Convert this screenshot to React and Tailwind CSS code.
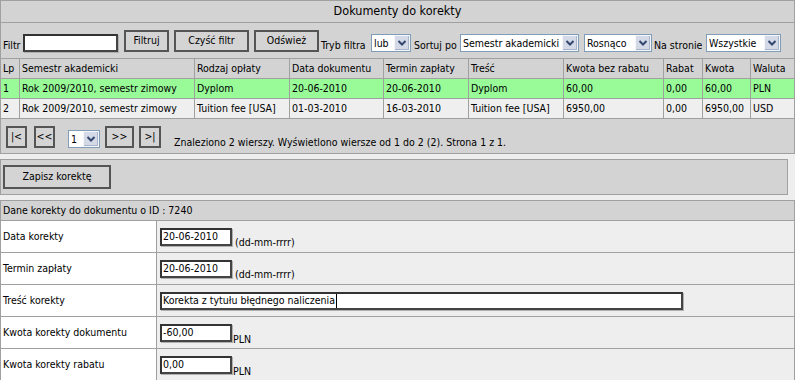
import React from "react";

const Chevron = () => (
  <svg width="10" height="8" viewBox="0 0 10 8">
    <path d="M1.5 2 L5 5.5 L8.5 2" fill="none" stroke="#33466e" strokeWidth="2" />
  </svg>
);

function Select({ value, cls }) {
  return (
    <div className={`flex h-[18px] bg-white border border-[#7f9db9] ${cls}`}>
      <div className="flex-1 pl-[2px] leading-[16px] whitespace-nowrap overflow-hidden">{value}</div>
      <div className="w-[16px] h-full bg-[#d3d9e7] border border-[#f4f6fa] shadow-[inset_-1px_-1px_0_#aab4c8] flex items-center justify-center">
        <Chevron />
      </div>
    </div>
  );
}

function Btn({ children, cls }) {
  return (
    <div className={`flex items-center justify-center bg-[#d4d4d4] border-2 border-[#555555] whitespace-nowrap ${cls}`}>
      {children}
    </div>
  );
}

function Field({ children, cls }) {
  return (
    <div className={`flex items-center h-[18px] bg-white border-2 border-[#333333] border-r-[#444444] border-b-[#444444] shadow-[1px_1px_0_#b0b0b0] pl-[1px] whitespace-nowrap ${cls}`}>
      {children}
    </div>
  );
}

const cols = "grid grid-cols-[19px_175px_95px_94px_85px_95px_100px_39px_48px_1fr]";
const cell = "border-r border-[#a0a0a0] pl-[2px] flex items-center whitespace-nowrap overflow-hidden";
const lastCell = "pl-[2px] flex items-center whitespace-nowrap overflow-hidden";

function Row({ data, bg }) {
  return (
    <div className={`${cols} h-[20px] border-b border-[#a0a0a0] ${bg}`}>
      {data.map((d, i) => (
        <div key={i} className={i === data.length - 1 ? lastCell : cell}>
          {d}
        </div>
      ))}
    </div>
  );
}

function FormRow({ label, children }) {
  return (
    <div className="flex h-[32px] border-b border-[#a0a0a0]">
      <div className="w-[156px] bg-white border-r border-[#a0a0a0] flex items-center pl-[2px]">{label}</div>
      <div className="flex-1 bg-[#eeeeee] flex items-center pl-[3px]">{children}</div>
    </div>
  );
}

export default function App() {
  return (
    <div className="w-[795px] h-[380px] overflow-hidden bg-[#eeeeee] text-black text-[10.5px] font-['DejaVu_Sans_Condensed','Liberation_Sans',sans-serif]">
      <div className="border-x border-t border-[#a0a0a0] bg-[#d3d3d3]">
        <div className="h-[22px] border-b border-[#a0a0a0] flex items-center justify-center text-[12.5px]">
          Dokumenty do korekty
        </div>
        <div className="h-[36px] border-b border-[#a0a0a0] flex items-end pb-[6px] pl-[2px]">
          <span className="leading-[13px] w-[20px]">Filtr</span>
          <Field cls="w-[95px] h-[18px]"></Field>
          <Btn cls="w-[45px] h-[22px] ml-[6px]">Filtruj</Btn>
          <Btn cls="w-[75px] h-[22px] ml-[5px]">Czyść filtr</Btn>
          <Btn cls="w-[65px] h-[22px] ml-[5px]">Odśwież</Btn>
          <span className="leading-[13px] ml-[2px] w-[48px] whitespace-nowrap">Tryb filtra</span>
          <Select value="lub" cls="w-[40px] ml-[2px]" />
          <span className="leading-[13px] ml-[3px] w-[44px] whitespace-nowrap">Sortuj po</span>
          <Select value="Semestr akademicki" cls="w-[119px] ml-[2px]" />
          <Select value="Rosnąco" cls="w-[68px] ml-[5px]" />
          <span className="leading-[13px] ml-[2px] w-[51px] whitespace-nowrap">Na stronie</span>
          <Select value="Wszystkie" cls="w-[75px] ml-[1px]" />
        </div>
        <Row
          bg="bg-[#d3d3d3]"
          data={["Lp", "Semestr akademicki", "Rodzaj opłaty", "Data dokumentu", "Termin zapłaty", "Treść", "Kwota bez rabatu", "Rabat", "Kwota", "Waluta"]}
        />
        <Row
          bg="bg-[#98fb98]"
          data={["1", "Rok 2009/2010, semestr zimowy", "Dyplom", "20-06-2010", "20-06-2010", "Dyplom", "60,00", "0,00", "60,00", "PLN"]}
        />
        <Row
          bg="bg-[#efefef]"
          data={["2", "Rok 2009/2010, semestr zimowy", "Tuition fee [USA]", "01-03-2010", "16-03-2010", "Tuition fee [USA]", "6950,00", "0,00", "6950,00", "USD"]}
        />
        <div className="h-[35px] border-b border-[#a0a0a0] flex items-end pb-[5px] pl-[5px]">
          <Btn cls="w-[21px] h-[22px]">|&lt;</Btn>
          <Btn cls="w-[21px] h-[22px] ml-[7px]">&lt;&lt;</Btn>
          <Select value="1" cls="w-[32px] ml-[13px]" />
          <Btn cls="w-[29px] h-[22px] ml-[5px]">&gt;&gt;</Btn>
          <Btn cls="w-[22px] h-[22px] ml-[5px]">&gt;|</Btn>
          <span className="ml-[13px] leading-[13px] mb-[-1px] whitespace-nowrap">
            Znaleziono 2 wierszy. Wyświetlono wiersze od 1 do 2 (2). Strona 1 z 1.
          </span>
        </div>
      </div>

      <div className="mt-[5px] w-[788px] h-[36px] border border-[#a0a0a0] bg-[#d3d3d3] pt-[5px] pl-[2px]">
        <Btn cls="w-[108px] h-[24px]">Zapisz korektę</Btn>
      </div>

      <div className="mt-[5px] border border-[#a0a0a0] border-b-0">
        <div className="h-[20px] border-b border-[#a0a0a0] bg-[#d3d3d3] flex items-center pl-[2px]">
          Dane korekty do dokumentu o ID : 7240
        </div>
        <FormRow label="Data korekty">
          <div className="flex items-end">
            <Field cls="w-[72px]">20-06-2010</Field>
            <span className="ml-[3px] leading-[13px] mb-[-3px]">(dd-mm-rrrr)</span>
          </div>
        </FormRow>
        <FormRow label="Termin zapłaty">
          <div className="flex items-end">
            <Field cls="w-[72px]">20-06-2010</Field>
            <span className="ml-[3px] leading-[13px] mb-[-3px]">(dd-mm-rrrr)</span>
          </div>
        </FormRow>
        <FormRow label="Treść korekty">
          <Field cls="w-[523px]">
            Korekta z tytułu błędnego naliczenia
            <span className="inline-block w-[1px] h-[14px] bg-black ml-[1px]"></span>
          </Field>
        </FormRow>
        <FormRow label="Kwota korekty dokumentu">
          <div className="flex items-end">
            <Field cls="w-[72px]">-60,00</Field>
            <span className="ml-[1px] leading-[13px] mb-[-4px]">PLN</span>
          </div>
        </FormRow>
        <FormRow label="Kwota korekty rabatu">
          <div className="flex items-end">
            <Field cls="w-[72px]">0,00</Field>
            <span className="ml-[1px] leading-[13px] mb-[-4px]">PLN</span>
          </div>
        </FormRow>
      </div>
    </div>
  );
}
